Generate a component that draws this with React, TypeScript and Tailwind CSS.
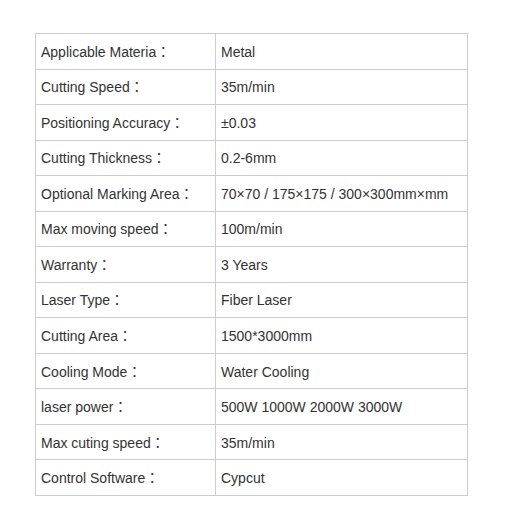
import React from 'react'

const rows: [string, string][] = [
  ['Applicable Materia', 'Metal'],
  ['Cutting Speed', '35m/min'],
  ['Positioning Accuracy', '±0.03'],
  ['Cutting Thickness', '0.2-6mm'],
  ['Optional Marking Area', '70×70 / 175×175 / 300×300mm×mm'],
  ['Max moving speed', '100m/min'],
  ['Warranty', '3 Years'],
  ['Laser Type', 'Fiber Laser'],
  ['Cutting Area', '1500*3000mm'],
  ['Cooling Mode', 'Water Cooling'],
  ['laser power', '500W 1000W 2000W 3000W'],
  ['Max cuting speed', '35m/min'],
  ['Control Software', 'Cypcut'],
]

export default function App() {
  return (
    <div className="min-h-[529px] bg-white pt-[33px] pl-[35px] font-['Liberation_Sans','Noto_Sans_CJK_JP',sans-serif] text-[14px] text-[#333]">
      <table className="w-[432px] border-collapse table-fixed">
        <colgroup>
          <col className="w-[180px]" />
          <col className="w-[252px]" />
        </colgroup>
        <tbody>
          {rows.map(([label, value]) => (
            <tr key={label} className="h-[35.54px]">
              <td className="border border-[#ccc] px-[5px] pt-[2px] pb-0 align-middle">{label}：</td>
              <td className="border border-[#ccc] px-[5px] pt-[2px] pb-0 align-middle">{value}</td>
            </tr>
          ))}
        </tbody>
      </table>
    </div>
  )
}
